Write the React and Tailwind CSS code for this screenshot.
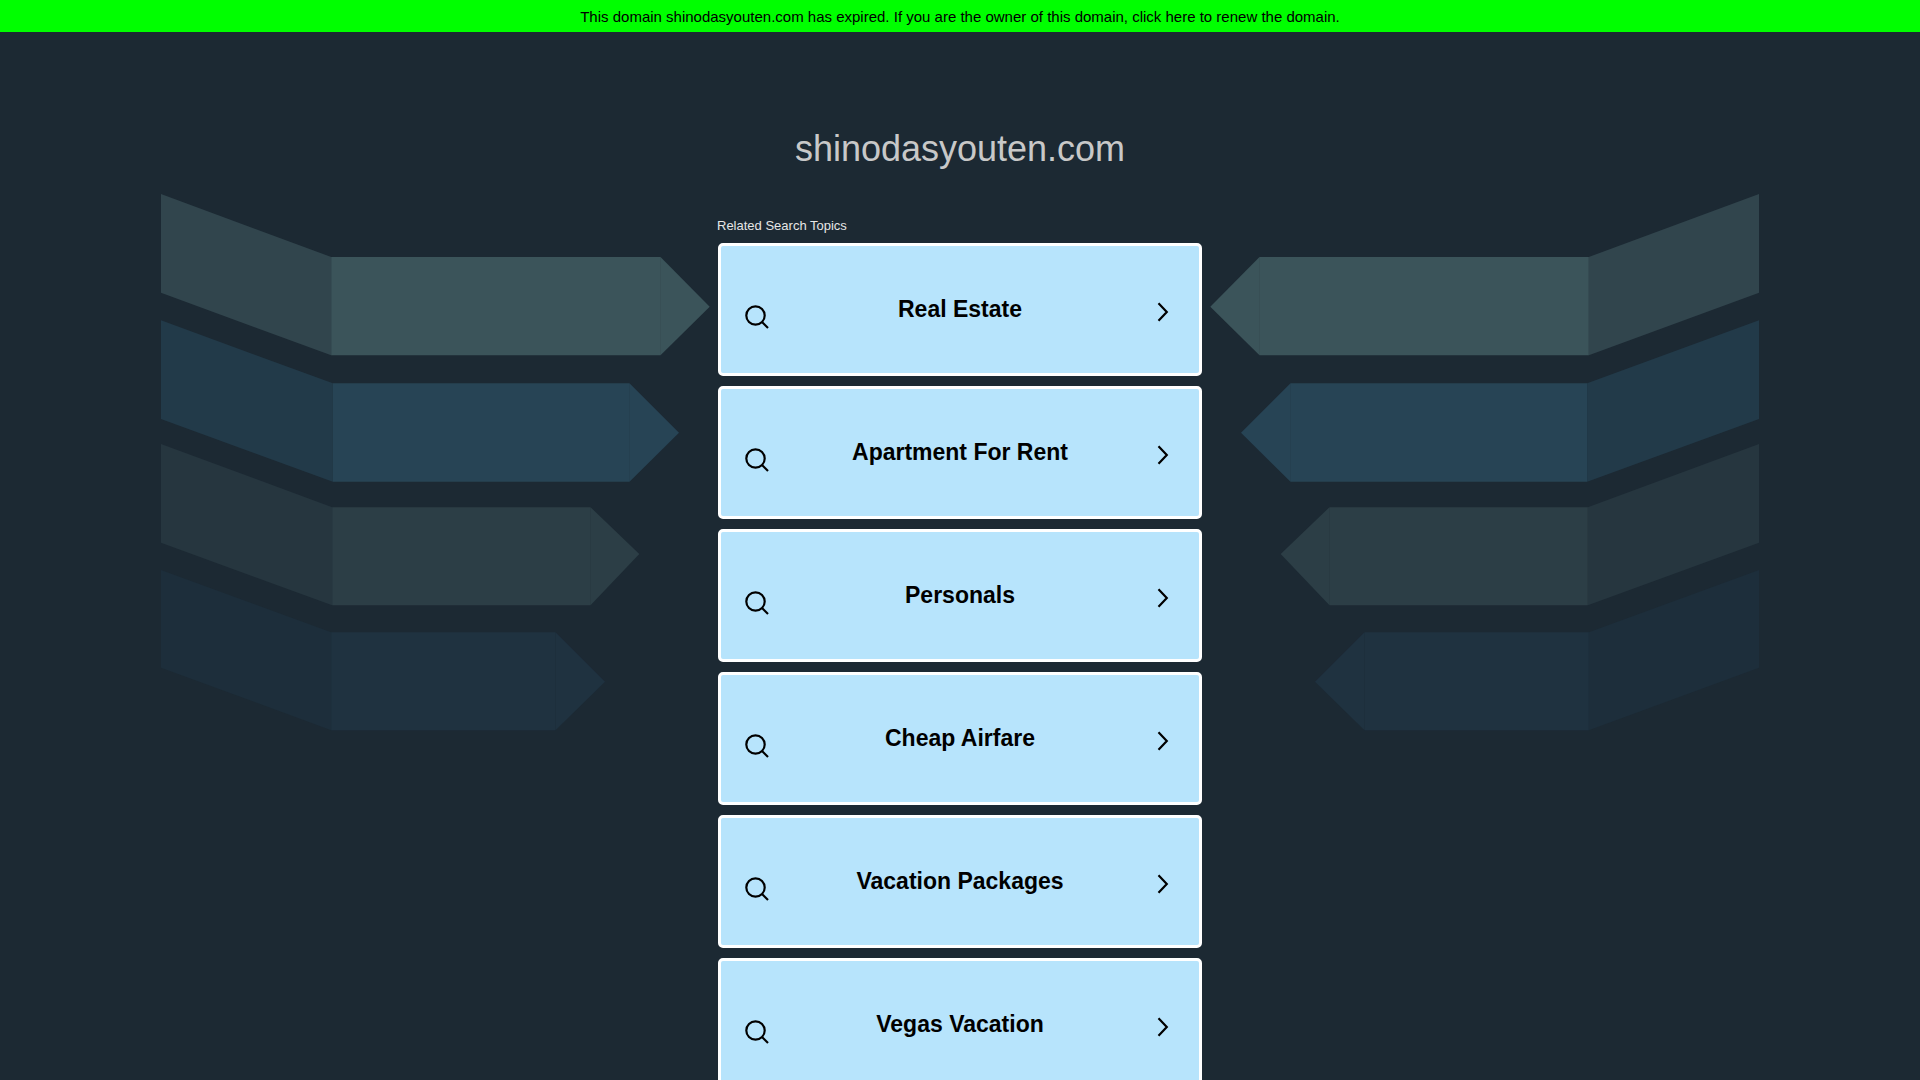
import React from "react";

const topics = ["Real Estate", "Apartment For Rent", "Personals", "Cheap Airfare", "Vacation Packages", "Vegas Vacation"];

// left-hand arrows, the right-hand ones are mirrored around x = 960
const arrows = [
  { wing: "#31454d", body: "#3b545a", y0: 194, y1: 292.7, mx: 331.2, top: 257, bottom: 355.3, end: 660.5, tip: 709.7, tipY: 306.7 },
  { wing: "#223a49", body: "#274455", y0: 320.3, y1: 419, mx: 332.8, top: 383.3, bottom: 481.7, end: 629.5, tip: 679, tipY: 432.7 },
  { wing: "#26363f", body: "#2c3e46", y0: 444, y1: 542.7, mx: 332.2, top: 507.2, bottom: 605.3, end: 590.5, tip: 639.3, tipY: 554 },
  { wing: "#1d2e3b", body: "#1f3240", y0: 570, y1: 667.7, mx: 331.2, top: 632.3, bottom: 730.2, end: 555.5, tip: 605, tipY: 681.7 },
];

const Arrow = ({ a }) => (
  <g>
    <polygon fill={a.wing} points={`161,${a.y0} ${a.mx},${a.top} ${a.mx},${a.bottom} 161,${a.y1}`} />
    <polygon fill={a.body} points={`${a.mx},${a.top} ${a.end},${a.top} ${a.tip},${a.tipY} ${a.end},${a.bottom} ${a.mx},${a.bottom}`} />
    {/* the faint seam where the point starts */}
    <line x1={a.end} y1={a.top} x2={a.end} y2={a.bottom} stroke="#000" strokeOpacity="0.05" />
  </g>
);

const Backdrop = () => (
  <svg className="absolute inset-0" width="1920" height="1080" viewBox="0 0 1920 1080">
    {arrows.map((a, i) => <Arrow key={i} a={a} />)}
    <g transform="translate(1920 0) scale(-1 1)">
      {arrows.map((a, i) => <Arrow key={i} a={a} />)}
    </g>
  </svg>
);

const SearchIcon = () => (
  <svg className="mt-[15px]" width="25" height="25" viewBox="0 0 25 25" fill="none" stroke="#000" strokeWidth="2.2">
    <circle cx="10.5" cy="10.5" r="9.2" />
    <path d="M17 17 L23 23" />
  </svg>
);

const ChevronIcon = () => (
  <svg className="mr-[6px] mt-[5px]" width="12" height="20" viewBox="0 0 12 20" fill="none" stroke="#000" strokeWidth="2.2">
    <path d="M1.5 1.2 L9.8 10 L1.5 18.8" />
  </svg>
);

const TopicCard = ({ name }) => (
  <a
    href="#"
    className="ml-px grid h-[133px] w-[484px] shrink-0 grid-cols-[1fr_auto_1fr] items-center rounded-[5px] border-[3px] border-white bg-[#b7e4fc] px-6"
  >
    <SearchIcon />
    <span className="-mt-px text-[23px] font-bold text-black">{name}</span>
    <span className="flex justify-end"><ChevronIcon /></span>
  </a>
);

const App = () => {
  return (
    <div className="relative h-screen overflow-hidden bg-[#1c2933] font-['Liberation_Sans',Arial,sans-serif]">
      <Backdrop />
      <div className="relative">
        <div className="flex h-8 items-center justify-center bg-[#00ff00] pt-[2px] text-[15px] text-black">
          This domain shinodasyouten.com has expired. If you are the owner of this domain, click here to renew the domain.
        </div>
        <h1 className="mt-[96px] text-center text-4xl leading-[42px] text-[#c8c8c8]">shinodasyouten.com</h1>
        <div className="mx-auto mt-[48px] w-[486px]">
          <p className="mb-[10px] text-[13px] leading-[15px] text-[#e6e6e6]">Related Search Topics</p>
          <div className="flex flex-col gap-[10px]">
            {topics.map((t) => <TopicCard key={t} name={t} />)}
          </div>
        </div>
      </div>
    </div>
  );
};

export default App;
